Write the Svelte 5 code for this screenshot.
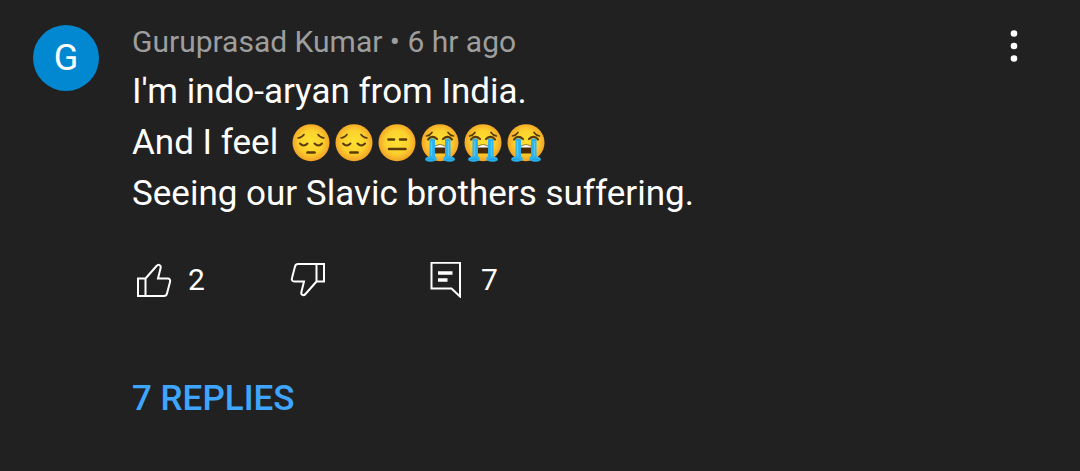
<script>
  const lines = [
    { text: "I'm indo-aryan from India.", faces: [] },
    { text: 'And I feel ', faces: ['pensive', 'pensive', 'flat', 'sob', 'sob', 'sob'] },
    { text: 'Seeing our Slavic brothers suffering.', faces: [] }
  ];
  const labels = { pensive: 'pensive face', flat: 'expressionless face', sob: 'loudly crying face' };
</script>

{#snippet face(kind)}
  <svg class="emoji" viewBox="0 0 38 38" role="img" aria-label={labels[kind]}>
    <circle cx="19" cy="18.700" r="18.500" fill="url(#skin)" />
    {#if kind === 'pensive'}
      <g fill="none" stroke="#5b3b08" stroke-linecap="round">
        <path d="M6 14Q10 13.500 12 10.500M32 14Q28 13.500 26 10.500" stroke-width="1.600" />
        <path d="M8 19.500Q11.500 23.500 15.500 19.500M22.500 19.500Q26.500 23.500 30 19.500" stroke-width="2" />
        <path d="M15.500 28.500H22.500" stroke-width="2.700" />
      </g>
    {:else if kind === 'flat'}
      <path d="M10.500 15.500H16M22 15.500H28M11 25H27.500" fill="none" stroke="#5b3b08" stroke-width="2.600" stroke-linecap="round" />
    {:else}
      <path d="M5.500 12Q9 11.500 11 8.500M32.500 12Q29 11.500 27 8.500" fill="none" stroke="#5b3b08" stroke-width="1.700" stroke-linecap="round" />
      <path d="M7 15.500Q11 10.500 16 15M22 15Q27 10.500 31 15.500" fill="none" stroke="#5b3b08" stroke-width="2.200" stroke-linecap="round" />
      <path d="M12.500 29.500V25Q13 20.500 19 20.500T25.500 25V29.500Z" fill="#4a2a08" />
      <path d="M13.500 23.500Q14.500 21 19 21T24.500 23.500Z" fill="#fff" />
      <path d="M8.500 15.500Q11 13.500 14 15.500V32.500Q17 34 15 36.500Q9 39 4.500 36.500Q3 33.500 8.500 32.500Z" fill="#29b2ee" />
      <path d="M29.500 15.500Q27 13.500 24 15.500V32.500Q21 34 23 36.500Q29 39 33.500 36.500Q35 33.500 29.500 32.500Z" fill="#29b2ee" />
      <path d="M10.500 17V32M27.500 17V32" stroke="#55c5f5" stroke-width="1.500" />
      <path d="M6 36Q10 34 13 36M25 36Q28 34 32 36" fill="none" stroke="#1f9bdc" stroke-width="1" />
    {/if}
  </svg>
{/snippet}

{#snippet thumb()}
  <path d="M2 16.500H9.500V34H2ZM9.500 16.500L20.500 4C22.500 1.800 25.300 3 24.600 6L22 16.500H31.500C33.800 16.500 34.600 18 34 20L31 31.500C30.500 33.400 29.700 34 28 34H9.500" />
{/snippet}

<svg class="defs" aria-hidden="true">
  <defs>
    <radialGradient id="skin" cx="50%" cy="48%" r="52%">
      <stop offset="0" stop-color="#fee032" />
      <stop offset="0.6" stop-color="#fcd12d" />
      <stop offset="1" stop-color="#f2a127" />
    </radialGradient>
  </defs>
</svg>

<article class="comment">
  <div class="avatar">G</div>
  <div class="body">
    <header>Guruprasad Kumar • 6 hr ago</header>
    <div class="message">
      {#each lines as line}
        <p>
          <span class="words">{line.text}</span>{#if line.faces.length}<span class="faces">{#each line.faces as kind}{@render face(kind)}{/each}</span>{/if}
        </p>
      {/each}
    </div>
    <div class="actions">
      <button class="like" aria-label="Like, 2">
        <svg class="icon" viewBox="0 0 36 36">{@render thumb()}</svg>
        <span>2</span>
      </button>
      <button class="dislike" aria-label="Dislike">
        <svg class="icon" viewBox="0 0 36 36"><g transform="rotate(180 18 18)">{@render thumb()}</g></svg>
      </button>
      <button class="reply" aria-label="Comments, 7">
        <svg class="icon" viewBox="0 0 36 36">
          <path d="M2.500 0.800H31V34.500L22.500 26.500H2.500Z" />
          <path d="M9 11H23.500M9 18H18.500" stroke-width="3.400" />
        </svg>
        <span>7</span>
      </button>
    </div>
    <button class="replies">7 REPLIES</button>
  </div>
  <button class="menu" aria-label="More options">
    <svg viewBox="0 0 12 36"><circle cx="6" cy="5.500" r="3.300" /><circle cx="6" cy="18" r="3.300" /><circle cx="6" cy="30.500" r="3.300" /></svg>
  </button>
</article>

<style>
  :global(body) {
    margin: 0;
    background: #212121;
    font-family: Roboto, sans-serif;
  }
  .defs {
    position: absolute;
    width: 0;
    height: 0;
  }
  .comment {
    display: flex;
    align-items: flex-start;
    gap: 33px;
    padding: 25px 60px 48px 33px;
    color: #fff;
  }
  .avatar {
    display: flex;
    align-items: center;
    justify-content: center;
    flex: none;
    width: 66px;
    height: 66px;
    border-radius: 50%;
    background: #0288d1;
    font-size: 36px;
  }
  .body {
    flex: 1;
    min-width: 0;
  }
  header {
    margin-bottom: 7px;
    color: #9e9e9e;
    font-size: 30px;
    line-height: 34px;
  }
  .message {
    font-size: 35px;
    line-height: 51px;
  }
  p {
    display: flex;
    align-items: center;
    margin: 0;
  }
  .words {
    white-space: pre;
  }
  .faces {
    display: flex;
    gap: 5px;
    padding-left: 5px;
  }
  .emoji {
    width: 38px;
    height: 38px;
  }
  button {
    padding: 0;
    border: 0;
    background: none;
    color: inherit;
    font-family: inherit;
    cursor: pointer;
  }
  .actions {
    display: flex;
    align-items: center;
    margin-top: 41px;
    padding-left: 4px;
  }
  .actions button {
    display: flex;
    align-items: center;
    gap: 16px;
    font-size: 30px;
    line-height: 40px;
  }
  .like {
    width: 154px;
  }
  .dislike {
    width: 139px;
  }
  .icon {
    width: 36px;
    height: 36px;
    fill: none;
    stroke: #fff;
    stroke-width: 2;
    stroke-linejoin: miter;
  }
  .replies {
    display: block;
    margin-top: 75px;
    color: #3ea6ff;
    font-size: 35px;
    font-weight: 500;
    line-height: 48px;
  }
  .menu {
    flex: none;
    margin-top: 3px;
  }
  .menu svg {
    display: block;
    width: 12px;
    height: 36px;
    fill: #fff;
  }
</style>
